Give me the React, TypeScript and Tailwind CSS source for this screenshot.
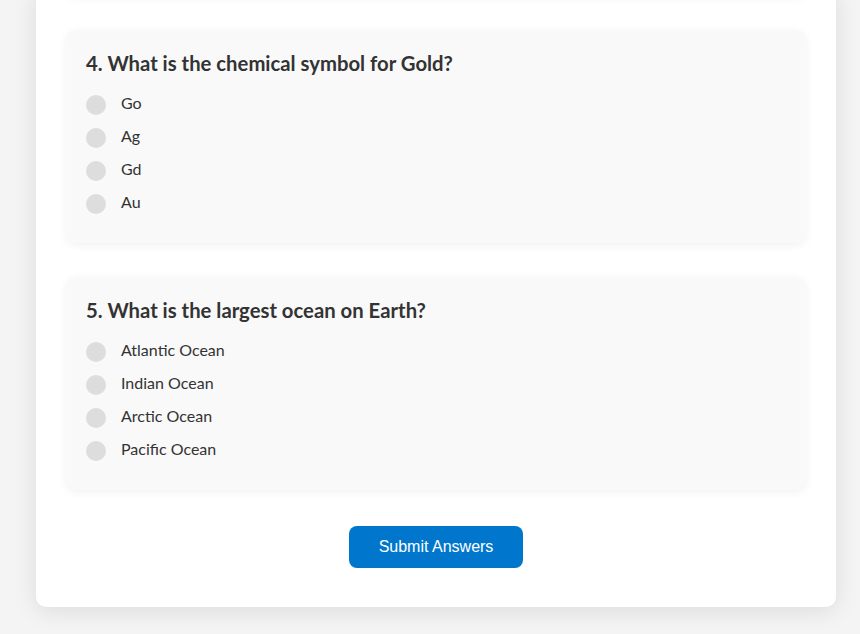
import React from "react";

const questions = [
  {
    n: 4,
    q: "4. What is the chemical symbol for Gold?",
    options: ["Go", "Ag", "Gd", "Au"],
  },
  {
    n: 5,
    q: "5. What is the largest ocean on Earth?",
    options: ["Atlantic Ocean", "Indian Ocean", "Arctic Ocean", "Pacific Ocean"],
  },
];

function QuestionCard({ q, options }: { q: string; options: string[] }) {
  return (
    <div className="mb-[34px] rounded-[10px] bg-[#f9f9f9] px-[20px] pt-[20px] pb-[23px] shadow-[0_2px_10px_rgba(0,0,0,0.06)]">
      <h3 className="mb-[10px] text-[20.3px] font-bold leading-[27px] text-[#333]">{q}</h3>
      <div className="pt-px">
        {options.map((o) => (
          <label key={o} className="flex h-[33px] items-center">
            <span className="mr-[15px] h-[20px] w-[20px] shrink-0 rounded-full bg-[#dddddd]" />
            <span className="-mt-[3px] text-[16px] leading-[22px] text-[#333]">{o}</span>
          </label>
        ))}
      </div>
    </div>
  );
}

export default function App() {
  return (
    <div
      className="h-[634px] overflow-hidden bg-[#f4f4f4] pt-px"
      style={{ fontFamily: 'Lato, "Noto Sans", sans-serif' }}
    >
      <div className="mx-[36px] -mt-[11px] w-[800px] rounded-b-[10px] bg-white px-[30px] pb-[39px] shadow-[0_4px_24px_rgba(0,0,0,0.1)]">
        {/* bottom edge of the previous question card, scrolled out of view */}
        <div className="mb-[34px] h-[6px] rounded-b-[10px] bg-[#f9f9f9] shadow-[0_2px_10px_rgba(0,0,0,0.06)]" />
        {questions.map((item) => (
          <QuestionCard key={item.n} q={item.q} options={item.options} />
        ))}
        <div className="mt-[36px] flex justify-center">
          <button
            className="h-[42px] rounded-[8px] bg-[#0077cc] px-[30px] text-[16px] text-white"
            style={{ fontFamily: '"Liberation Sans", Arial, sans-serif' }}
          >
            Submit Answers
          </button>
        </div>
      </div>
    </div>
  );
}
